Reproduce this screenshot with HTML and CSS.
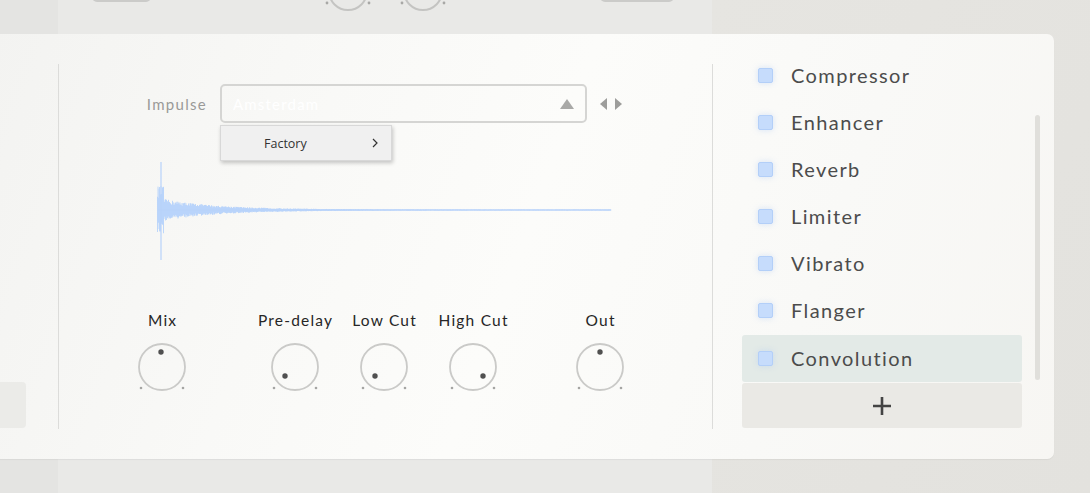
FILE: index.html
```html
<!DOCTYPE html>
<html>
<head>
<meta charset="utf-8">
<link rel="stylesheet" href="styles.css">
</head>
<body>
<div class="stage">
  <div class="backdrop">
    <div class="bg-left"></div>
    <div class="bg-mid">
      <div class="ghost-row">
        <div class="ghost-btn"></div>
        <svg class="ghost-knob" width="50" height="30" viewBox="0 0 50 30"><circle cx="25" cy="-9" r="19" fill="none" stroke="#c4c4c2" stroke-width="2"/><circle cx="4" cy="3" r="1.4" fill="#a8a8a6"/><circle cx="46" cy="3" r="1.4" fill="#a8a8a6"/></svg>
        <svg class="ghost-knob second" width="50" height="30" viewBox="0 0 50 30"><circle cx="25" cy="-9" r="19" fill="none" stroke="#c4c4c2" stroke-width="2"/><circle cx="4" cy="3" r="1.4" fill="#a8a8a6"/><circle cx="46" cy="3" r="1.4" fill="#a8a8a6"/></svg>
        <div class="ghost-btn wide"></div>
      </div>
    </div>
    <div class="bg-right"></div>
  </div>

  <div class="panel">
    <div class="col-left">
      <div class="left-box"></div>
    </div>
    <div class="divider"></div>
    <div class="col-center">
      <div class="impulse-row">
        <span class="impulse-label">Impulse</span>
        <div class="dropdown">
          <span class="dropdown-text">Amsterdam</span>
          <svg class="dropdown-caret" width="14" height="10" viewBox="0 0 14 10"><path d="M7 0L14 10H0Z" fill="#a9a9a7"/></svg>
        </div>
        <div class="nav-arrows">
          <svg width="8" height="12" viewBox="0 0 8 12"><path d="M7 0V12L0 6Z" fill="#9d9d9b"/></svg>
          <svg width="8" height="12" viewBox="0 0 8 12"><path d="M1 0V12L8 6Z" fill="#9d9d9b"/></svg>
        </div>
        <div class="menu">
          <span class="menu-item">Factory</span>
          <svg class="menu-chevron" width="6" height="10" viewBox="0 0 6 10"><path d="M1 1L5 5L1 9" fill="none" stroke="#333" stroke-width="1.2"/></svg>
        </div>
      </div>
      <svg class="wave" width="460" height="104" viewBox="0 0 460 104">
        <path id="wavepath" d="" fill="none" stroke="#b7d2fa" stroke-width="0.9"/>
        <path d="M3 50H456" stroke="#b7d2fa" stroke-width="1.2"/>
        <path d="M6 2V100" stroke="#b7d2fa" stroke-width="1.2"/>
      </svg>
      <div class="knob-row">
        <div class="knob">
          <span class="knob-label">Mix</span>
          <svg width="50" height="50" viewBox="0 0 50 50"><circle cx="25" cy="25" r="23" fill="none" stroke="#cacac8" stroke-width="1.8"/><circle cx="4" cy="46" r="1.3" fill="#a5a5a3"/><circle cx="46" cy="46" r="1.3" fill="#a5a5a3"/><circle cx="24" cy="10" r="2.7" fill="#505050"/></svg>
        </div>
        <div class="knob wide-gap">
          <span class="knob-label">Pre-delay</span>
          <svg width="50" height="50" viewBox="0 0 50 50"><circle cx="25" cy="25" r="23" fill="none" stroke="#cacac8" stroke-width="1.8"/><circle cx="4" cy="46" r="1.3" fill="#a5a5a3"/><circle cx="46" cy="46" r="1.3" fill="#a5a5a3"/><circle cx="15" cy="34" r="2.7" fill="#505050"/></svg>
        </div>
        <div class="knob">
          <span class="knob-label">Low Cut</span>
          <svg width="50" height="50" viewBox="0 0 50 50"><circle cx="25" cy="25" r="23" fill="none" stroke="#cacac8" stroke-width="1.8"/><circle cx="4" cy="46" r="1.3" fill="#a5a5a3"/><circle cx="46" cy="46" r="1.3" fill="#a5a5a3"/><circle cx="16" cy="34" r="2.7" fill="#505050"/></svg>
        </div>
        <div class="knob">
          <span class="knob-label">High Cut</span>
          <svg width="50" height="50" viewBox="0 0 50 50"><circle cx="25" cy="25" r="23" fill="none" stroke="#cacac8" stroke-width="1.8"/><circle cx="4" cy="46" r="1.3" fill="#a5a5a3"/><circle cx="46" cy="46" r="1.3" fill="#a5a5a3"/><circle cx="35" cy="34" r="2.7" fill="#505050"/></svg>
        </div>
        <div class="knob out-gap">
          <span class="knob-label">Out</span>
          <svg width="50" height="50" viewBox="0 0 50 50"><circle cx="25" cy="25" r="23" fill="none" stroke="#cacac8" stroke-width="1.8"/><circle cx="4" cy="46" r="1.3" fill="#a5a5a3"/><circle cx="46" cy="46" r="1.3" fill="#a5a5a3"/><circle cx="25" cy="10" r="2.7" fill="#505050"/></svg>
        </div>
      </div>
    </div>
    <div class="divider"></div>
    <div class="col-right">
      <div class="fx-list">
        <div class="fx-row"><span class="check"></span><span class="fx-name">Compressor</span></div>
        <div class="fx-row"><span class="check"></span><span class="fx-name">Enhancer</span></div>
        <div class="fx-row"><span class="check"></span><span class="fx-name">Reverb</span></div>
        <div class="fx-row"><span class="check"></span><span class="fx-name">Limiter</span></div>
        <div class="fx-row"><span class="check"></span><span class="fx-name">Vibrato</span></div>
        <div class="fx-row"><span class="check"></span><span class="fx-name">Flanger</span></div>
        <div class="fx-row selected"><span class="check"></span><span class="fx-name">Convolution</span></div>
        <div class="add-btn">
          <svg width="20" height="20" viewBox="0 0 20 20"><path d="M10 1V19M1 10H19" stroke="#444" stroke-width="2.6"/></svg>
        </div>
      </div>
      <div class="scrollbar"></div>
    </div>
  </div>
</div>
<script src="script.js"></script>
</body>
</html>
```

FILE: styles.css
```css
html, body {
  margin: 0;
  padding: 0;
}
body {
  width: 1090px;
  height: 493px;
  overflow: hidden;
  background: #e4e3df;
  font-family: "Lato", "Open Sans", sans-serif;
}
.stage {
  position: relative;
  width: 1090px;
  height: 493px;
}
.backdrop {
  display: flex;
  height: 493px;
}
.bg-left {
  width: 58px;
  background: #e4e4e2;
}
.bg-mid {
  width: 654px;
  background: #e9e9e7;
}
.bg-right {
  flex: 1;
  background: linear-gradient(120deg, #e6e5e1, #e3e2de);
}
.ghost-row {
  display: flex;
  align-items: flex-start;
  padding-left: 34px;
  margin-top: -20px;
}
.ghost-btn {
  width: 59px;
  height: 22px;
  border: 2px solid #cbcbc9;
  border-radius: 5px;
  box-sizing: border-box;
}
.ghost-btn.wide {
  width: 74px;
  margin-left: 152px;
}
.ghost-knob {
  margin-top: 20px;
  margin-left: 172px;
}
.ghost-knob.second {
  margin-left: 25px;
}

.panel {
  position: absolute;
  top: 34px;
  left: -10px;
  width: 1064px;
  height: 425px;
  border-radius: 7px;
  background: linear-gradient(110deg, #f3f3f1 0%, #f9f9f7 30%, #fcfcfa 50%, #f9f9f7 75%, #f7f6f3 100%);
  box-shadow: 0 1px 1px rgba(0,0,0,0.05);
  display: grid;
  grid-template-columns: 68px 1px 653px 1px 341px;
}
.col-left {
  position: relative;
}
.left-box {
  margin-top: 348px;
  width: 36px;
  height: 46px;
  background: #ebebe8;
  border-radius: 0 4px 4px 0;
}
.divider {
  margin: 30px 0;
  background: #dcdcda;
}
.col-center {
  display: flex;
  flex-direction: column;
  padding-top: 50px;
}
.impulse-row {
  position: relative;
  display: flex;
  align-items: center;
  height: 39px;
}
.impulse-label {
  width: 148px;
  text-align: right;
  margin-right: 13px;
  font-size: 15px;
  color: #9a9a98;
  letter-spacing: 1.3px;
}
.dropdown {
  width: 367px;
  height: 39px;
  box-sizing: border-box;
  border: 2px solid #d5d5d3;
  border-radius: 5px;
  display: flex;
  align-items: center;
  padding: 0 10px 0 11px;
}
.dropdown-text {
  flex: 1;
  color: #ffffff;
  font-size: 15px;
  letter-spacing: 1.2px;
}
.dropdown-caret {
  margin-right: 1px;
}
.nav-arrows {
  display: flex;
  gap: 6px;
  margin-left: 13px;
}
.menu {
  position: absolute;
  left: 161px;
  top: 41px;
  width: 172px;
  height: 36px;
  box-sizing: border-box;
  background: #f0f0f0;
  border: 1px solid #d8d8d8;
  box-shadow: 1px 2px 4px rgba(0,0,0,0.22);
  display: flex;
  align-items: center;
  padding-left: 43px;
  padding-right: 13px;
}
.menu-item {
  flex: 1;
  font-family: "Open Sans", "Noto Sans", sans-serif;
  font-size: 12.5px;
  color: #333;
}
.wave {
  display: block;
  margin-top: 37px;
  margin-left: 96px;
}
.knob-row {
  display: flex;
  margin-top: 47px;
  padding-left: 63px;
}
.knob {
  width: 80px;
  display: flex;
  flex-direction: column;
  align-items: center;
  gap: 13px;
}
.knob + .knob {
  margin-left: 9px;
}
.knob.wide-gap {
  margin-left: 53px;
}
.knob.out-gap {
  margin-left: 47px;
}
.knob-label {
  font-size: 15.5px;
  line-height: 18px;
  height: 18px;
  color: #262626;
  letter-spacing: 1.2px;
  white-space: nowrap;
  margin-right: -1.2px;
}
.col-right {
  display: flex;
  align-items: flex-start;
  padding-left: 29px;
  padding-top: 18px;
}
.fx-list {
  width: 280px;
  display: flex;
  flex-direction: column;
}
.fx-row {
  height: 47px;
  display: flex;
  align-items: center;
  padding-left: 16px;
  border-radius: 3px;
}
.fx-row.selected {
  background: #e3eae7;
  margin-top: 1px;
}
.check {
  width: 15px;
  height: 15px;
  box-sizing: border-box;
  background: #c6dcfc;
  border: 1px solid #b3cff8;
  border-radius: 2px;
  box-shadow: 0 0 6px rgba(170, 200, 245, 0.45);
  margin-right: 18px;
}
.fx-name {
  font-size: 20px;
  line-height: 24px;
  padding-bottom: 2px;
  color: #4c4c4c;
  letter-spacing: 1.4px;
}
.add-btn {
  height: 45px;
  margin-top: 1px;
  background: #eae9e5;
  border-radius: 3px;
  display: flex;
  align-items: center;
  justify-content: center;
}
.scrollbar {
  width: 5px;
  height: 265px;
  margin-top: 63px;
  margin-left: 13px;
  border-radius: 3px;
  background: #e0dfdb;
}
```

FILE: script.js
```js
(function () {
  var s = 12345;
  function rnd() { s = (s * 16807) % 2147483647; return s / 2147483647; }
  var d = '';
  for (var x = 2.5; x <= 456; x += 0.5) {
    var env;
    if (x < 9) env = 24;
    else env = 10.5 * Math.exp(-(x - 9) / 55) + 0.5;
    var a = env * (0.5 + 0.5 * rnd());
    var b = env * (0.5 + 0.5 * rnd());
    d += 'M' + x.toFixed(1) + ' ' + (50 - a).toFixed(2) + 'V' + (50 + b).toFixed(2);
  }
  document.getElementById('wavepath').setAttribute('d', d);
})();
```
